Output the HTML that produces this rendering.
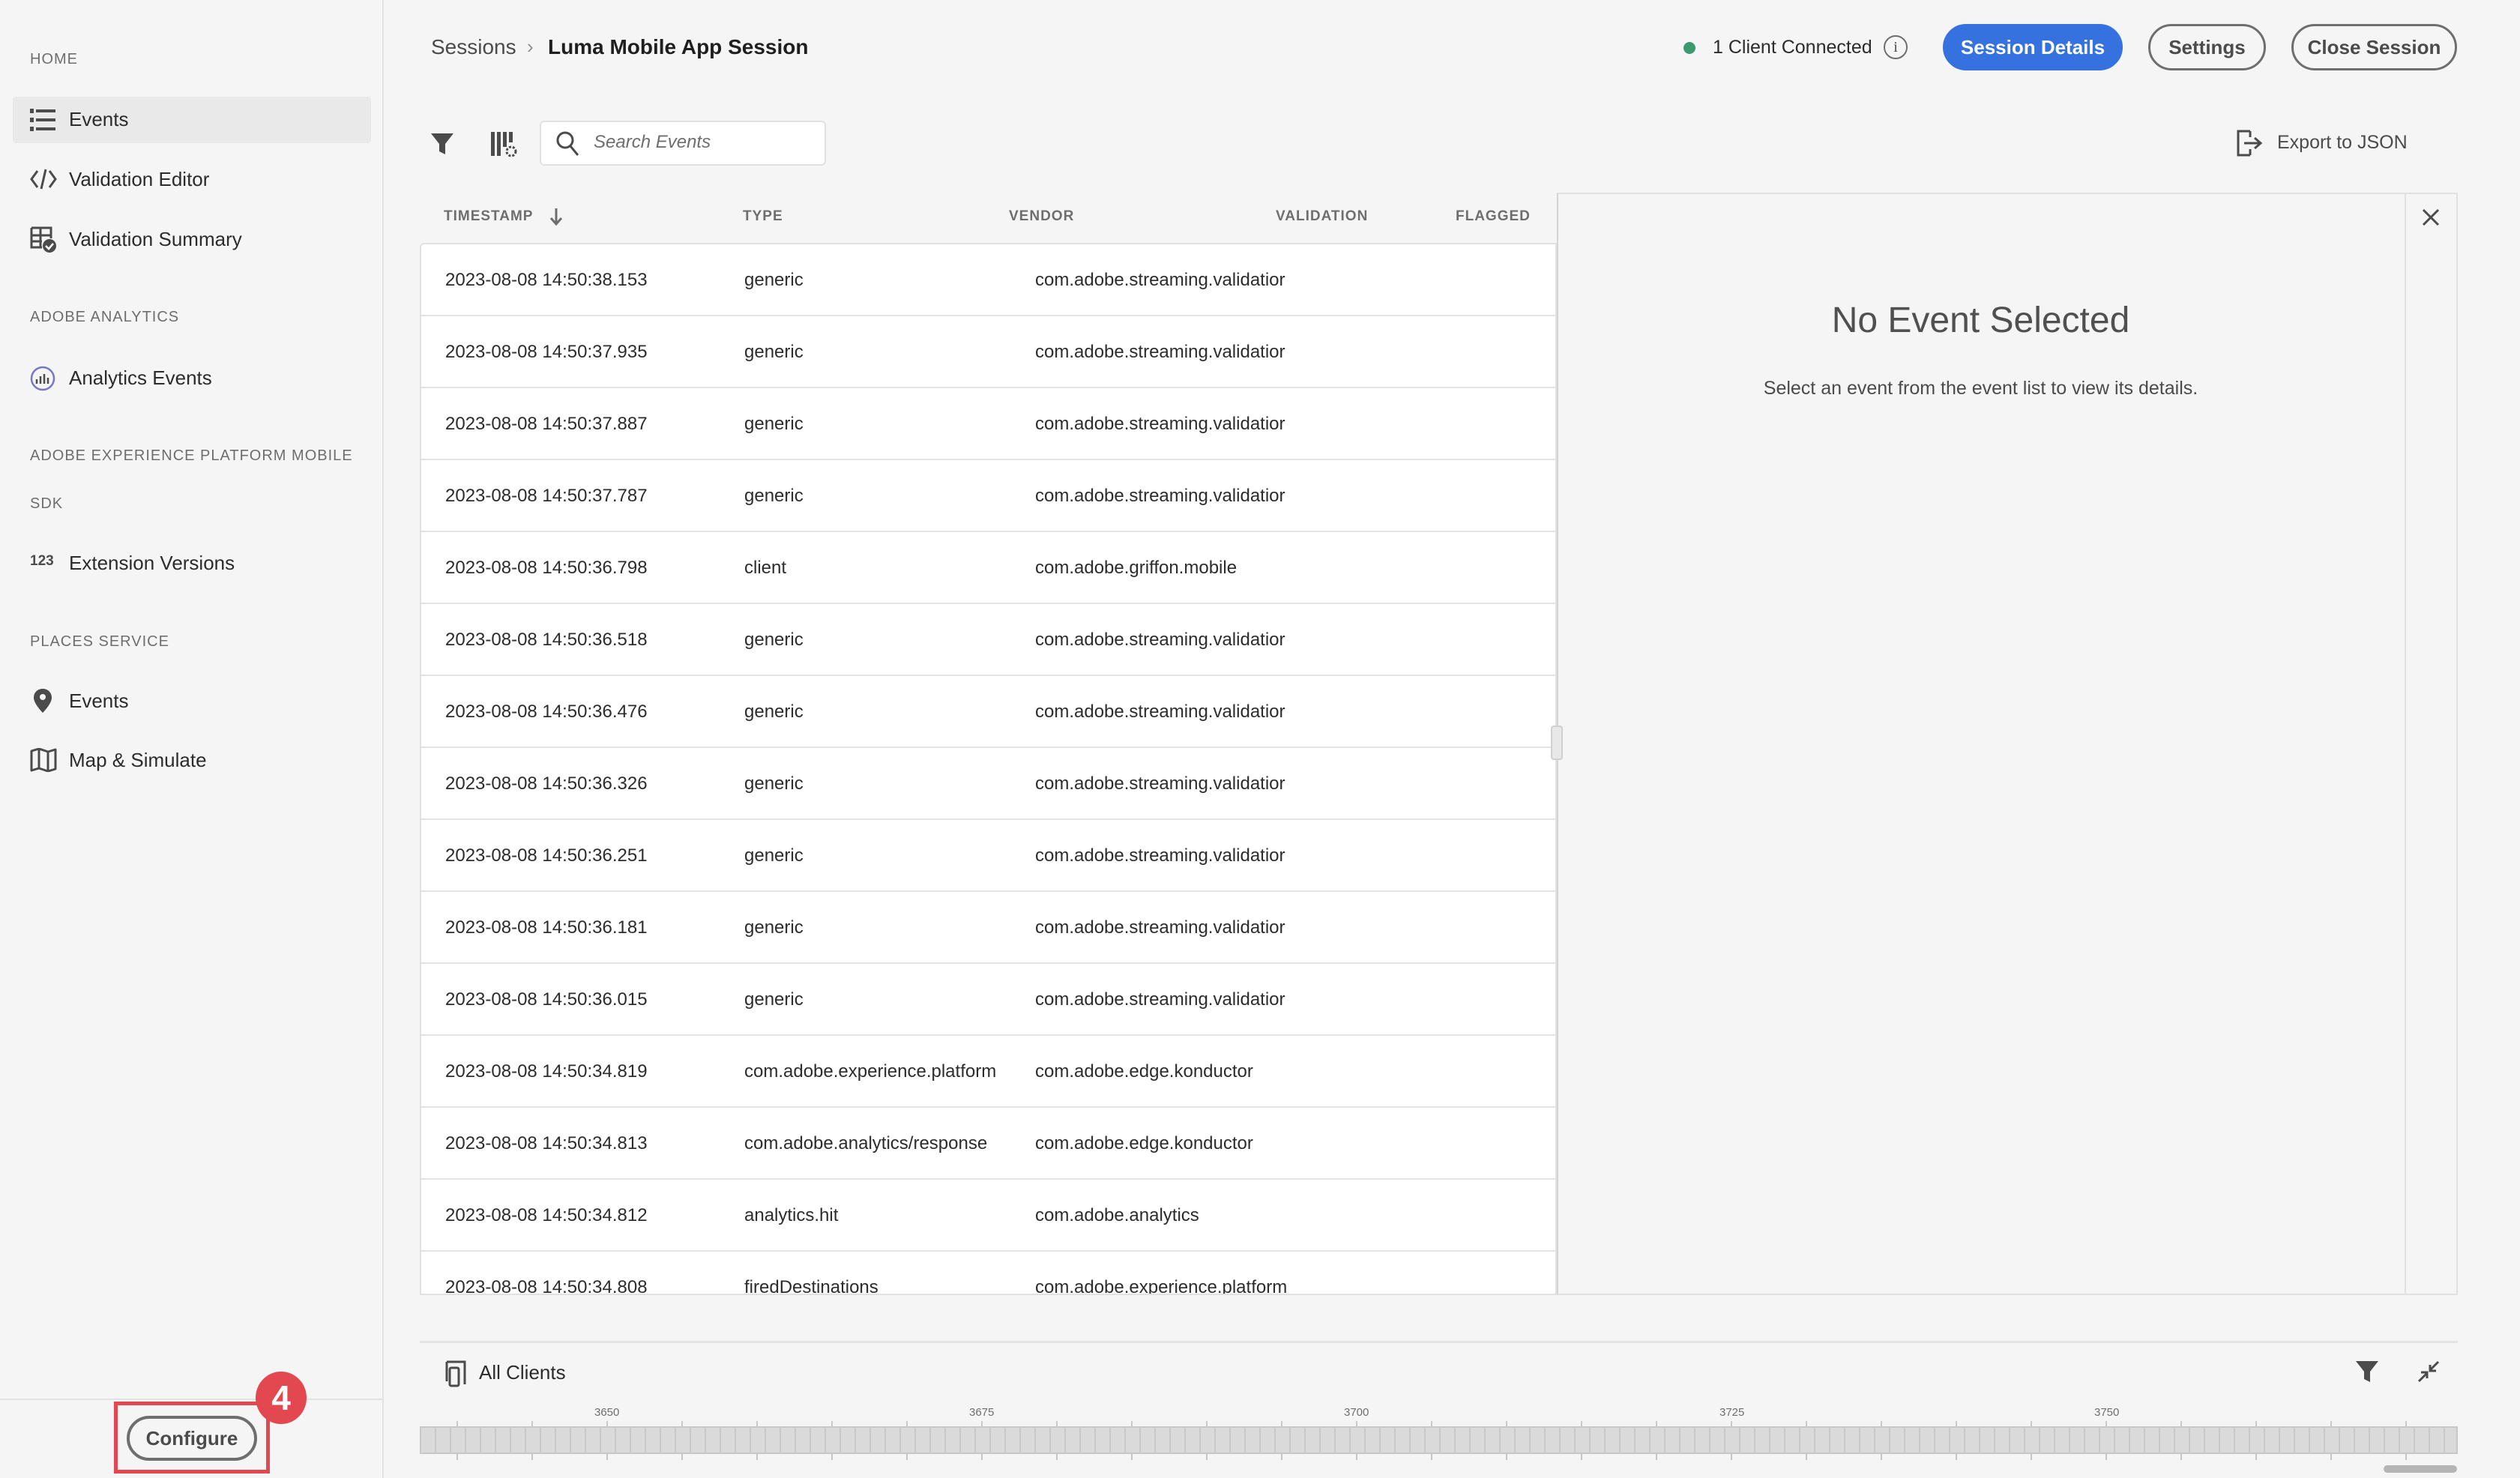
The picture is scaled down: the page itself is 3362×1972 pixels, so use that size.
<!DOCTYPE html>
<html><head><meta charset="utf-8"><style>
*{margin:0;padding:0;box-sizing:border-box}
body{width:3362px;height:1972px;background:#f5f5f5;font-family:"Liberation Sans",sans-serif;color:#2c2c2c;position:relative;overflow:hidden}
.a{position:absolute;white-space:nowrap}
.lbl{font-size:20px;color:#6e6e6e;letter-spacing:1px}
.item{font-size:26px;color:#2c2c2c}
.col{font-size:19px;color:#6e6e6e;font-weight:bold;letter-spacing:1px;top:278px}
.row{position:absolute;left:562px;width:1513px;height:96px;border-bottom:2px solid #e3e3e3;background:#fff;font-size:24px;color:#2c2c2c}
.row span{position:absolute;top:34px}
.btn{position:absolute;top:32px;height:62px;border-radius:31px;font-size:26px;text-align:center;line-height:56px;border:3px solid #6e6e6e;color:#4b4b4b;font-weight:bold}
</style></head><body>
<!-- sidebar -->
<div class="a" style="left:0;top:0;width:512px;height:1972px;border-right:2px solid #e3e3e3;background:#f5f5f5"></div>
<div class="a lbl" style="left:40px;top:68px">HOME</div>
<div class="a" style="left:17px;top:129px;width:478px;height:62px;background:#e9e9e9;border-radius:4px"></div>
<svg class="a" style="left:40px;top:144px" width="34" height="32" viewBox="0 0 34 32"><g fill="#4b4b4b"><rect x="0" y="1" width="5" height="6"/><rect x="8" y="2" width="26" height="4"/><rect x="0" y="13" width="5" height="6"/><rect x="8" y="14" width="26" height="4"/><rect x="0" y="25" width="5" height="6"/><rect x="8" y="26" width="26" height="4"/></g></svg>
<div class="a item" style="left:92px;top:144px">Events</div>
<svg class="a" style="left:40px;top:224px" width="36" height="30" viewBox="0 0 36 30"><path d="M10 4 L2 15 L10 26 M26 4 L34 15 L26 26 M21 2 L15 28" stroke="#4b4b4b" stroke-width="3" fill="none"/></svg>
<div class="a item" style="left:92px;top:224px">Validation Editor</div>
<svg class="a" style="left:40px;top:302px" width="36" height="36" viewBox="0 0 36 36"><path d="M2 2h26v14M2 2v26h14M2 12h26M2 20h14M14 2v26" stroke="#4b4b4b" stroke-width="3" fill="none"/><circle cx="26" cy="26" r="9" fill="#4b4b4b"/><path d="M21 26l4 4 6-7" stroke="#fff" stroke-width="2.5" fill="none"/></svg>
<div class="a item" style="left:92px;top:304px">Validation Summary</div>
<div class="a lbl" style="left:40px;top:412px">ADOBE ANALYTICS</div>
<svg class="a" style="left:40px;top:488px" width="34" height="34" viewBox="0 0 34 34"><circle cx="17" cy="17" r="15" fill="none" stroke="#7a76c7" stroke-width="2.5"/><g stroke="#4b4b4b" stroke-width="2.5"><path d="M9 24v-6M14 24v-10M19 24v-13M24 24v-8"/></g></svg>
<div class="a item" style="left:92px;top:489px">Analytics Events</div>
<div class="a lbl" style="left:40px;top:597px">ADOBE EXPERIENCE PLATFORM MOBILE</div>
<div class="a lbl" style="left:40px;top:661px">SDK</div>
<div class="a" style="left:40px;top:738px;font-size:19px;color:#4b4b4b;font-weight:bold">123</div>
<div class="a item" style="left:92px;top:736px">Extension Versions</div>
<div class="a lbl" style="left:40px;top:845px">PLACES SERVICE</div>
<svg class="a" style="left:44px;top:918px" width="26" height="34" viewBox="0 0 26 34"><path d="M13 1C6 1 1 6 1 13c0 8 12 20 12 20s12-12 12-20C25 6 20 1 13 1z" fill="#4b4b4b"/><circle cx="13" cy="12" r="4" fill="#f5f5f5"/></svg>
<div class="a item" style="left:92px;top:920px">Events</div>
<svg class="a" style="left:40px;top:998px" width="36" height="32" viewBox="0 0 36 32"><path d="M2 4l10-3 12 4 10-3v26l-10 3-12-4-10 3z M12 1v26 M24 5v26" stroke="#4b4b4b" stroke-width="3" fill="none" stroke-linejoin="round"/></svg>
<div class="a item" style="left:92px;top:999px">Map &amp; Simulate</div>
<div class="a" style="left:0;top:1866px;width:512px;height:2px;background:#e3e3e3"></div>
<div class="a" style="left:152px;top:1870px;width:208px;height:96px;border:5px solid #e34850"></div>
<div class="a" style="left:169px;top:1889px;width:174px;height:60px;border:4px solid #6e6e6e;border-radius:30px;font-size:26px;font-weight:bold;color:#4b4b4b;text-align:center;line-height:52px">Configure</div>
<div class="a" style="left:341px;top:1830px;width:68px;height:70px;border-radius:50%;background:#e34850;color:#fff;font-size:46px;font-weight:bold;text-align:center;line-height:70px">4</div>

<!-- header -->
<div class="a" style="left:575px;top:47px;font-size:28px;color:#4b4b4b">Sessions</div>
<div class="a" style="left:703px;top:47px;font-size:26px;color:#8e8e8e">›</div>
<div class="a" style="left:731px;top:47px;font-size:28px;font-weight:bold;color:#1f1f1f">Luma Mobile App Session</div>
<div class="a" style="left:2246px;top:56px;width:16px;height:16px;border-radius:50%;background:#3d9a6f"></div>
<div class="a" style="left:2285px;top:49px;font-size:25px;color:#2c2c2c">1 Client Connected</div>
<div class="a" style="left:2513px;top:47px;width:32px;height:32px;border:2.5px solid #6e6e6e;border-radius:50%;font-size:20px;text-align:center;line-height:28px;color:#4b4b4b;font-family:'Liberation Serif',serif">i</div>
<div class="btn" style="left:2592px;width:240px;background:#3672df;border-color:#3672df;color:#fff">Session Details</div>
<div class="btn" style="left:2866px;width:157px">Settings</div>
<div class="btn" style="left:3057px;width:221px">Close Session</div>

<!-- toolbar -->
<svg class="a" style="left:574px;top:176px" width="32" height="32" viewBox="0 0 32 32"><path d="M1 2h30L20 16v14l-8-4V16z" fill="#4b4b4b"/></svg>
<svg class="a" style="left:654px;top:174px" width="36" height="36" viewBox="0 0 36 36"><g fill="#4b4b4b"><rect x="1" y="2" width="5" height="32"/><rect x="9" y="2" width="5" height="32"/><rect x="17" y="2" width="5" height="20"/><rect x="25" y="2" width="5" height="14"/></g><circle cx="28" cy="28" r="6" fill="none" stroke="#4b4b4b" stroke-width="3" stroke-dasharray="3 2"/></svg>
<div class="a" style="left:720px;top:161px;width:382px;height:60px;background:#fff;border:2px solid #e1e1e1;border-radius:6px"></div>
<svg class="a" style="left:741px;top:174px" width="34" height="36" viewBox="0 0 34 36"><circle cx="13" cy="13" r="10" fill="none" stroke="#4b4b4b" stroke-width="3"/><path d="M20 21l10 12" stroke="#4b4b4b" stroke-width="3"/></svg>
<div class="a" style="left:792px;top:176px;font-size:24px;font-style:italic;color:#6e6e6e">Search Events</div>
<svg class="a" style="left:2984px;top:173px" width="38" height="36" viewBox="0 0 38 36"><path d="M18 2H2v32h16M18 2v8M18 26v8" stroke="#4b4b4b" stroke-width="3" fill="none"/><path d="M10 18h20M24 11l8 7-8 7" stroke="#4b4b4b" stroke-width="3" fill="none"/></svg>
<div class="a" style="left:3038px;top:176px;font-size:25px;color:#4b4b4b">Export to JSON</div>

<!-- table header -->
<div class="a col" style="left:592px">TIMESTAMP</div>
<svg class="a" style="left:732px;top:276px" width="20" height="26" viewBox="0 0 20 26"><path d="M10 2v20M3 15l7 8 7-8" stroke="#6e6e6e" stroke-width="3" fill="none"/></svg>
<div class="a col" style="left:991px">TYPE</div>
<div class="a col" style="left:1346px">VENDOR</div>
<div class="a col" style="left:1702px">VALIDATION</div>
<div class="a col" style="left:1942px">FLAGGED</div>

<div class="a" style="left:560px;top:324px;width:1517px;height:1404px;border:2px solid #e1e1e1;border-radius:6px 0 0 0;background:#fff;overflow:hidden">
<div style="position:relative">
<div class="row" style="left:0;top:0"><span style="left:32px">2023-08-08 14:50:38.153</span><span style="left:431px">generic</span><span style="left:819px">com.adobe.streaming.validatior</span></div>
<div class="row" style="left:0;top:96px"><span style="left:32px">2023-08-08 14:50:37.935</span><span style="left:431px">generic</span><span style="left:819px">com.adobe.streaming.validatior</span></div>
<div class="row" style="left:0;top:192px"><span style="left:32px">2023-08-08 14:50:37.887</span><span style="left:431px">generic</span><span style="left:819px">com.adobe.streaming.validatior</span></div>
<div class="row" style="left:0;top:288px"><span style="left:32px">2023-08-08 14:50:37.787</span><span style="left:431px">generic</span><span style="left:819px">com.adobe.streaming.validatior</span></div>
<div class="row" style="left:0;top:384px"><span style="left:32px">2023-08-08 14:50:36.798</span><span style="left:431px">client</span><span style="left:819px">com.adobe.griffon.mobile</span></div>
<div class="row" style="left:0;top:480px"><span style="left:32px">2023-08-08 14:50:36.518</span><span style="left:431px">generic</span><span style="left:819px">com.adobe.streaming.validatior</span></div>
<div class="row" style="left:0;top:576px"><span style="left:32px">2023-08-08 14:50:36.476</span><span style="left:431px">generic</span><span style="left:819px">com.adobe.streaming.validatior</span></div>
<div class="row" style="left:0;top:672px"><span style="left:32px">2023-08-08 14:50:36.326</span><span style="left:431px">generic</span><span style="left:819px">com.adobe.streaming.validatior</span></div>
<div class="row" style="left:0;top:768px"><span style="left:32px">2023-08-08 14:50:36.251</span><span style="left:431px">generic</span><span style="left:819px">com.adobe.streaming.validatior</span></div>
<div class="row" style="left:0;top:864px"><span style="left:32px">2023-08-08 14:50:36.181</span><span style="left:431px">generic</span><span style="left:819px">com.adobe.streaming.validatior</span></div>
<div class="row" style="left:0;top:960px"><span style="left:32px">2023-08-08 14:50:36.015</span><span style="left:431px">generic</span><span style="left:819px">com.adobe.streaming.validatior</span></div>
<div class="row" style="left:0;top:1056px"><span style="left:32px">2023-08-08 14:50:34.819</span><span style="left:431px">com.adobe.experience.platform</span><span style="left:819px">com.adobe.edge.konductor</span></div>
<div class="row" style="left:0;top:1152px"><span style="left:32px">2023-08-08 14:50:34.813</span><span style="left:431px">com.adobe.analytics/response</span><span style="left:819px">com.adobe.edge.konductor</span></div>
<div class="row" style="left:0;top:1248px"><span style="left:32px">2023-08-08 14:50:34.812</span><span style="left:431px">analytics.hit</span><span style="left:819px">com.adobe.analytics</span></div>
<div class="row" style="left:0;top:1344px"><span style="left:32px">2023-08-08 14:50:34.808</span><span style="left:431px">firedDestinations</span><span style="left:819px">com.adobe.experience.platform</span></div>
</div></div>

<!-- details panel -->
<div class="a" style="left:2077px;top:257px;width:1202px;height:1471px;border:2px solid #e1e1e1;border-left:2px solid #d5d5d5;background:#f5f5f5"></div>
<div class="a" style="left:3208px;top:257px;width:2px;height:1471px;background:#e1e1e1"></div>
<svg class="a" style="left:3230px;top:277px" width="26" height="26" viewBox="0 0 26 26"><path d="M3 3l20 20M23 3L3 23" stroke="#4b4b4b" stroke-width="3"/></svg>
<div class="a" style="left:2077px;top:400px;width:1131px;text-align:center;font-size:48px;color:#505050">No Event Selected</div>
<div class="a" style="left:2077px;top:504px;width:1131px;text-align:center;font-size:25px;color:#4b4b4b">Select an event from the event list to view its details.</div>
<div class="a" style="left:2069px;top:968px;width:16px;height:46px;background:#e8e8e8;border:2px solid #d0d0d0;border-radius:4px"></div>

<!-- bottom timeline -->
<div class="a" style="left:560px;top:1789px;width:2719px;height:3px;background:#e3e3e3"></div>
<svg class="a" style="left:592px;top:1815px" width="32" height="36" viewBox="0 0 32 36"><path d="M4 2h24v30M4 2v26" stroke="#4b4b4b" stroke-width="3" fill="none"/><rect x="8" y="10" width="12" height="24" rx="2" fill="none" stroke="#4b4b4b" stroke-width="3"/></svg>
<div class="a" style="left:639px;top:1816px;font-size:26px;color:#2c2c2c">All Clients</div>
<svg class="a" style="left:3142px;top:1814px" width="32" height="32" viewBox="0 0 32 32"><path d="M1 2h30L20 16v14l-8-4V16z" fill="#4b4b4b"/></svg>
<svg class="a" style="left:3224px;top:1814px" width="32" height="32" viewBox="0 0 32 32"><path d="M3 29l11-11M6 17h8v8M29 3L18 14M26 15h-8V7" stroke="#4b4b4b" stroke-width="3" fill="none"/></svg>
<div class="a" style="left:793px;top:1876px;font-size:15px;color:#6e6e6e">3650</div>
<div class="a" style="left:1293px;top:1876px;font-size:15px;color:#6e6e6e">3675</div>
<div class="a" style="left:1793px;top:1876px;font-size:15px;color:#6e6e6e">3700</div>
<div class="a" style="left:2294px;top:1876px;font-size:15px;color:#6e6e6e">3725</div>
<div class="a" style="left:2794px;top:1876px;font-size:15px;color:#6e6e6e">3750</div>
<div class="a" style="left:560px;top:1896px;width:2719px;height:52px;background:repeating-linear-gradient(90deg,transparent 0 49px,#c8c8c8 49px 51px,transparent 51px 100px)"></div>
<div class="a" style="left:560px;top:1903px;width:2719px;height:37px;border:2px solid #c8c8c8;background:repeating-linear-gradient(90deg,#dadada 0 18px,#c9c9c9 18px 20px)"></div>
<div class="a" style="left:3180px;top:1955px;width:98px;height:10px;border-radius:5px;background:#b5b5b5"></div>
</body></html>
